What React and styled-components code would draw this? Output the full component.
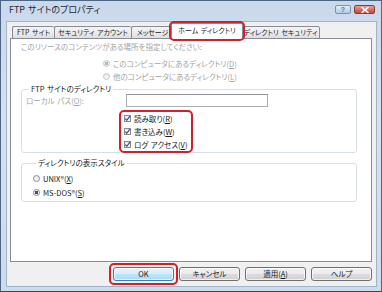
import React from "react"
import styled, { createGlobalStyle } from "styled-components"

const GlobalStyle = createGlobalStyle`
  html, body {
    margin: 0;
    padding: 0;
    background: #c6d6e8;
  }
  body {
    font-family: "Noto Sans CJK JP", "Noto Sans", sans-serif;
    font-size: 7.5px;
    font-feature-settings: "palt";
    word-spacing: 1px;
    color: #1a1a1a;
  }
`

const tabs = [
  { label: "FTP サイト", w: 42 },
  { label: "セキュリティ アカウント", w: 77 },
  { label: "メッセージ", w: 42 },
  { label: "ホーム ディレクトリ", w: 72, active: true },
  { label: "ディレクトリ セキュリティ", w: 79 },
]

const App = () => {
  return (
    <>
      <GlobalStyle />
      <Window>
        <TitleBar>
          <Title>FTP サイトのプロパティ</Title>
          <CaptionButtons>
            <HelpButton>?</HelpButton>
            <CloseButton>
              <svg width="8" height="6" viewBox="0 0 8 6">
                <path d="M1 0.5 L7 5.5 M7 0.5 L1 5.5" stroke="#fff" strokeWidth="1.6" strokeLinecap="round" />
              </svg>
            </CloseButton>
          </CaptionButtons>
        </TitleBar>

        <Client>
          <TabStrip>
            {tabs.map(t => (
              <Tab key={t.label} $w={t.w} $active={t.active}>
                {t.label}
              </Tab>
            ))}
          </TabStrip>

          <Panel>
            <Note>このリソースのコンテンツがある場所を指定してください:</Note>
            <RadioList>
              <OptionRow>
                <Radio $checked $disabled />
                <Label $disabled>このコンピュータにあるディレクトリ(<u>D</u>)</Label>
              </OptionRow>
              <OptionRow>
                <Radio $disabled />
                <Label $disabled>他のコンピュータにあるディレクトリ(<u>L</u>)</Label>
              </OptionRow>
            </RadioList>

            <Group>
              <Legend>FTP サイトのディレクトリ</Legend>
              <FieldRow>
                <FieldLabel>ローカル パス(<u>O</u>):</FieldLabel>
                <TextBox />
              </FieldRow>
              <Marked>
                <OptionRow>
                  <Check />
                  <Label>読み取り(<u>R</u>)</Label>
                </OptionRow>
                <OptionRow>
                  <Check />
                  <Label>書き込み(<u>W</u>)</Label>
                </OptionRow>
                <OptionRow>
                  <Check />
                  <Label>ログ アクセス(<u>V</u>)</Label>
                </OptionRow>
              </Marked>
            </Group>

            <StyleGroup>
              <Legend>ディレクトリの表示スタイル</Legend>
              <StyleRow>
                <Radio />
                <Label>UNIX®(<u>X</u>)</Label>
              </StyleRow>
              <StyleRow>
                <Radio $checked />
                <Label>MS-DOS®(<u>S</u>)</Label>
              </StyleRow>
            </StyleGroup>
          </Panel>

          <ButtonRow>
            <MarkedButton>
              <Button $default>OK</Button>
            </MarkedButton>
            <Button>キャンセル</Button>
            <Button>適用(<u>A</u>)</Button>
            <Button>ヘルプ</Button>
          </ButtonRow>
        </Client>
      </Window>
    </>
  )
}

const Check = () => (
  <CheckBox>
    <svg width="7" height="7" viewBox="0 0 7 7">
      <path d="M1.2 3.6 L2.8 5.3 L5.9 1.2" fill="none" stroke="#3b5a8c" strokeWidth="1.3" />
    </svg>
  </CheckBox>
)

export default App

const Window = styled.div`
  width: 382px;
  height: 292px;
  box-sizing: border-box;
  display: flex;
  flex-direction: column;
  background: linear-gradient(180deg, #c9d9eb 0%, #d4e1ef 40%, #cddcec 100%);
  border: 1px solid #4d6684;
  border-bottom-color: #2d4868;
`

const TitleBar = styled.div`
  height: 21px;
  flex: none;
  display: flex;
  align-items: center;
  padding: 0 6px 0 8px;
`

const Title = styled.div`
  flex: 1;
  font-size: 9px;
  color: #1e2a38;
  padding-bottom: 4px;
`

const CaptionButtons = styled.div`
  display: flex;
  gap: 3px;
  align-items: center;
  padding-bottom: 4px;
`

const HelpButton = styled.div`
  width: 16px;
  height: 9px;
  box-sizing: border-box;
  border: 1px solid #7b93b3;
  border-radius: 2px;
  background: linear-gradient(180deg, #e4eef8 0%, #c9dcee 50%, #b3cbe4 100%);
  color: #5b7397;
  font-family: "Liberation Sans", sans-serif;
  font-size: 7px;
  font-weight: bold;
  line-height: 7px;
  text-align: center;
`

const CloseButton = styled.div`
  width: 21px;
  height: 9px;
  box-sizing: border-box;
  border: 1px solid #8e3a35;
  border-radius: 2px;
  background: linear-gradient(180deg, #e6a397 0%, #d47363 50%, #c2493a 100%);
  display: flex;
  align-items: center;
  justify-content: center;
`

const Client = styled.div`
  flex: 1;
  margin: 0 5px 5px 6px;
  padding-top: 1px;
  background: #f0f0f0;
  box-shadow: 0 0 0 1px #9fb3c9;
  display: flex;
  flex-direction: column;
`

const TabStrip = styled.div`
  height: 16px;
  display: flex;
  align-items: flex-end;
  padding-left: 5px;
  margin-bottom: -1px;
  position: relative;
  z-index: 1;
`

const Tab = styled.div`
  width: ${p => p.$w}px;
  height: ${p => (p.$active ? 16 : 13)}px;
  box-sizing: border-box;
  flex: none;
  position: relative;
  margin: 0 ${p => (p.$active ? -2 : 0)}px 0 ${p => (p.$active ? -2 : 0)}px;
  z-index: ${p => (p.$active ? 2 : 1)};
  border: 1px solid #898c95;
  border-bottom-color: ${p => (p.$active ? "#fff" : "#898c95")};
  border-right-width: ${p => (p.$active ? 1 : 0)}px;
  border-radius: 2px 2px 0 0;
  background: ${p =>
    p.$active ? "#fff" : "linear-gradient(180deg, #f4f4f4 0%, #ebebeb 50%, #dedede 100%)"};
  font-size: 7px;
  white-space: nowrap;
  overflow: visible;
  text-align: center;
  line-height: ${p => (p.$active ? 13 : 11)}px;
  color: #1a1a1a;

  &:nth-child(5) {
    border-right-width: 1px;
  }

  ${p =>
    p.$active &&
    `
    &::after {
      content: "";
      position: absolute;
      top: -3px;
      left: -3px;
      right: -3px;
      bottom: -3px;
      border: 2px solid #d0202c;
      border-radius: 5px;
    }
  `}
`

const Panel = styled.div`
  height: 224px;
  box-sizing: border-box;
  margin: 0 4px 0 3px;
  padding: 3px 14px 0 10px;
  background: #fff;
  border: 1px solid #898c95;
`

const Note = styled.div`
  line-height: 10px;
  color: #a3a3a3;
`

const RadioList = styled.div`
  margin-top: 5px;
  padding-left: 82px;
`

const OptionRow = styled.div`
  height: 13px;
  display: flex;
  align-items: center;
  gap: 3px;
`

const StyleRow = styled(OptionRow)`
  height: 14px;
`

const Label = styled.span`
  white-space: nowrap;
  color: ${p => (p.$disabled ? "#a3a3a3" : "#1a1a1a")};
`

const Radio = styled.span`
  width: 7px;
  height: 7px;
  box-sizing: border-box;
  border-radius: 50%;
  flex: none;
  border: 1px solid ${p => (p.$disabled ? "#c4c4c4" : "#8b8b8b")};
  background: ${p =>
    p.$checked
      ? p.$disabled
        ? "radial-gradient(circle, #b5b5b5 0 1.6px, #f2f2f2 2px)"
        : "radial-gradient(circle, #3d5675 0 1.6px, #eef0f3 2px)"
      : "linear-gradient(180deg, #e6e6e6, #fbfbfb)"};
`

const CheckBox = styled.span`
  width: 7px;
  height: 7px;
  box-sizing: border-box;
  flex: none;
  border: 1px solid #8b8b8b;
  background: linear-gradient(180deg, #e9e9e9, #fcfcfc);
  display: flex;
  align-items: center;
  justify-content: center;

  svg {
    flex: none;
  }
`

const Group = styled.fieldset`
  margin: 1px 0 0;
  padding: 0 5px 0 4px;
  min-width: 0;
  border: 1px solid #d5dfe5;
  border-radius: 3px;
`

const StyleGroup = styled(Group)`
  margin-top: 5px;
  padding: 3px 5px 2px 11px;
`

const Legend = styled.legend`
  padding: 0 2px;
  margin-left: 3px;
  line-height: 10px;
  color: #1a1a1a;
  white-space: nowrap;
`

const FieldRow = styled.div`
  height: 13px;
  display: flex;
  align-items: center;
`

const FieldLabel = styled.span`
  width: 100px;
  flex: none;
  color: #a3a3a3;
  white-space: nowrap;
`

const TextBox = styled.div`
  width: 142px;
  height: 13px;
  box-sizing: border-box;
  border: 1px solid #abadb3;
  border-top-color: #8f9398;
  background: #fff;
`

const Marked = styled.div`
  width: 74px;
  box-sizing: border-box;
  margin: 3px 0 -1px 93px;
  padding: 0 3px;
  border: 2px solid #d0202c;
  border-radius: 5px;
`

const ButtonRow = styled.div`
  display: flex;
  justify-content: flex-end;
  gap: 5px;
  margin-top: 5px;
  padding-right: 4px;
`

const MarkedButton = styled.div`
  display: flex;
  margin: -4px;
  padding: 2px;
  border: 2px solid #d0202c;
  border-radius: 5px;
`

const Button = styled.div`
  width: 61px;
  height: 14px;
  box-sizing: border-box;
  border: 1px solid ${p => (p.$default ? "#3c7fb1" : "#707070")};
  border-radius: 3px;
  background: ${p =>
    p.$default
      ? "linear-gradient(180deg, #e5f4fc 0%, #d4eefb 50%, #bde5fb 51%, #a8d9f4 100%)"
      : "linear-gradient(180deg, #f2f2f2 0%, #ebebeb 50%, #dddddd 51%, #cfcfcf 100%)"};
  box-shadow: inset 0 0 0 1px rgba(255, 255, 255, 0.7);
  text-align: center;
  line-height: 12px;
  color: #1a1a1a;
  white-space: nowrap;
`
